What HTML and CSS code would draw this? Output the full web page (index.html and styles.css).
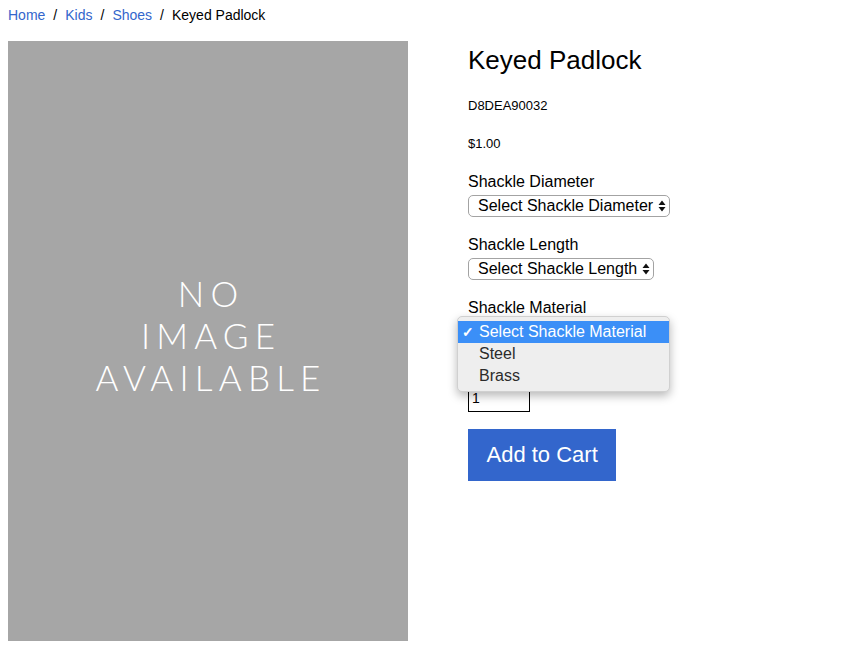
FILE: index.html
```html
<!DOCTYPE html>
<html lang="en">
<head>
<meta charset="utf-8">
<title>Keyed Padlock</title>
<link rel="stylesheet" href="styles.css">
</head>
<body>
<div class="page">
  <nav class="breadcrumb">
    <a href="#">Home</a><span class="sep">/</span>
    <a href="#">Kids</a><span class="sep">/</span>
    <a href="#">Shoes</a><span class="sep">/</span>
    <span class="current">Keyed Padlock</span>
  </nav>
  <div class="product">
    <div class="image">
      <div class="noimage">NO<br>IMAGE<br>AVAILABLE</div>
    </div>
    <div class="details">
      <h1 class="title">Keyed Padlock</h1>
      <p class="sku">D8DEA90032</p>
      <p class="price">$1.00</p>
      <div class="field first">
        <label class="label">Shackle Diameter</label>
        <div class="select-wrap">
          <select class="select"><option>Select Shackle Diameter</option></select>
          <svg class="arrows" width="8" height="12" viewBox="0 0 8 12"><path d="M4 0.5 L7.5 5 H0.5 Z M4 11.5 L7.5 7 H0.5 Z" fill="#111"/></svg>
        </div>
      </div>
      <div class="field">
        <label class="label">Shackle Length</label>
        <div class="select-wrap">
          <select class="select"><option>Select Shackle Length</option></select>
          <svg class="arrows" width="8" height="12" viewBox="0 0 8 12"><path d="M4 0.5 L7.5 5 H0.5 Z M4 11.5 L7.5 7 H0.5 Z" fill="#111"/></svg>
        </div>
      </div>
      <div class="field">
        <label class="label">Shackle Material</label>
        <div class="select-wrap">
          <select class="select"><option>Select Shackle Material</option><option>Steel</option><option>Brass</option></select>
          <svg class="arrows" width="8" height="12" viewBox="0 0 8 12"><path d="M4 0.5 L7.5 5 H0.5 Z M4 11.5 L7.5 7 H0.5 Z" fill="#111"/></svg>
          <ul class="menu">
            <li class="opt active"><span class="check">✓</span>Select Shackle Material</li>
            <li class="opt">Steel</li>
            <li class="opt">Brass</li>
          </ul>
        </div>
      </div>
      <input class="qty" type="text" value="1" aria-label="Quantity">
      <button class="cart">Add to Cart</button>
    </div>
  </div>
</div>
</body>
</html>
```
FILE: styles.css
```css
html, body {
  margin: 0;
  padding: 0;
  background: #fff;
}
body {
  font-family: "Liberation Sans", Arial, sans-serif;
  color: #000;
}
.page {
  padding: 7px 8px 0;
}
.breadcrumb {
  display: flex;
  gap: 8px;
  font-size: 14px;
  line-height: 16px;
  margin-bottom: 18px;
}
.breadcrumb a {
  color: #3366cc;
  text-decoration: none;
}
.product {
  display: flex;
  gap: 60px;
  align-items: flex-start;
}
.image {
  width: 400px;
  height: 600px;
  background: #a6a6a6;
  display: flex;
  align-items: center;
  justify-content: center;
  flex-shrink: 0;
}
.noimage {
  color: #fff;
  font-family: "Lato", sans-serif;
  font-weight: 300;
  font-size: 35px;
  line-height: 42px;
  letter-spacing: 6.2px;
  padding-left: 6.2px;
  text-align: center;
  margin-top: -12px;
}
.details {
  display: flex;
  flex-direction: column;
  align-items: flex-start;
}
.title {
  font-size: 26px;
  font-weight: normal;
  line-height: 30px;
  margin: 4px 0 0;
}
.sku, .price {
  font-size: 13px;
  line-height: 15px;
  margin: 23px 0 0;
}
.field {
  display: flex;
  flex-direction: column;
  align-items: flex-start;
  margin-bottom: 19px;
}
.field.first {
  margin-top: 22px;
}
.label {
  font-size: 16px;
  line-height: 18px;
}
.select-wrap {
  position: relative;
  margin-top: 4px;
  display: inline-flex;
}
.select {
  appearance: none;
  -webkit-appearance: none;
  font-family: "Liberation Sans", Arial, sans-serif;
  font-size: 16px;
  height: 22px;
  line-height: 20px;
  padding: 0 15px 0 9px;
  border: 1px solid #a3a3a3;
  border-radius: 5px;
  background: #fff;
  color: #000;
  margin: 0;
}
.arrows {
  position: absolute;
  right: 4px;
  top: 5px;
  pointer-events: none;
}
.menu {
  position: absolute;
  left: -11px;
  top: -5px;
  width: 213px;
  margin: 0;
  padding: 4px 0;
  list-style: none;
  background: #eeeeee;
  border: 1px solid #d0d0d0;
  border-radius: 5px;
  box-shadow: 0 4px 10px rgba(0,0,0,0.28);
  box-sizing: border-box;
  z-index: 5;
}
.opt {
  position: relative;
  height: 22px;
  line-height: 22px;
  font-size: 16px;
  padding-left: 21px;
  color: #2b2b2b;
}
.opt.active {
  background: #3b8ff7;
  color: #fff;
}
.check {
  position: absolute;
  left: 4px;
  top: 0;
  font-size: 14px;
  font-weight: bold;
}
.qty {
  margin-top: 22px;
  margin-bottom: 17px;
  width: 62px;
  height: 28px;
  box-sizing: border-box;
  border: 1px solid #000;
  border-radius: 0;
  padding: 0 3px;
  font-family: "Liberation Sans", Arial, sans-serif;
  font-size: 14px;
  color: #000;
  background: #fff;
  outline: none;
}
.cart {
  background: #3366cc;
  color: #fff;
  border: none;
  border-radius: 0;
  font-family: "Liberation Sans", Arial, sans-serif;
  font-size: 22px;
  line-height: 24px;
  padding: 14px 18.5px;
  margin: 0;
}
```
